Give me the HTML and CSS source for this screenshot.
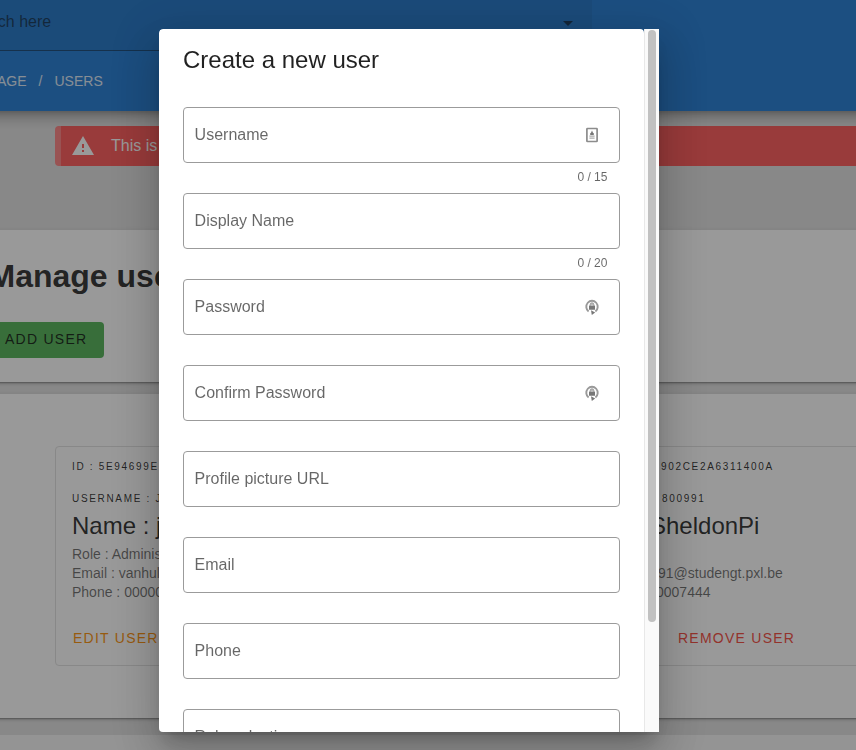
FILE: index.html
```html
<!DOCTYPE html>
<html lang="en">
<head>
<meta charset="utf-8">
<title>Users</title>
<link rel="stylesheet" href="styles.css">
</head>
<body>
<div class="page">
  <header class="header">
    <div class="search"><span class="search-text">Search here</span><span class="caret"></span></div>
    <nav class="crumbs"><span class="crumb-prev">HOMEPAGE</span><span class="slash">/</span><span>USERS</span></nav>
  </header>
  <div class="alert">
    <svg class="alert-icon" viewBox="0 0 24 24"><path d="M13 14H11V10H13M13 18H11V16H13M1 21H23L12 2L1 21Z"/></svg>
    <span>This is</span>
  </div>
  <section class="sheet manage">
    <h1>Manage users</h1>
    <button class="add">ADD USER</button>
  </section>
  <section class="sheet list">
    <div class="users">
      <article class="user">
        <p class="overline">ID : 5E94699E</p>
        <p class="overline">USERNAME : J</p>
        <h2>Name : j</h2>
        <p class="line">Role : Adminis</p>
        <p class="line">Email : vanhul</p>
        <p class="line">Phone : 00000</p>
        <div class="action edit">EDIT USER</div>
      </article>
      <article class="user second">
        <p class="overline id">902CE2A6311400A</p>
        <p class="overline name">800991</p>
        <h2>SheldonPi</h2>
        <p class="line">&nbsp;</p>
        <p class="line mail">91@studengt.pxl.be</p>
        <p class="line phone">0007444</p>
        <div class="action remove">REMOVE USER</div>
      </article>
    </div>
  </section>
  <footer class="footer"></footer>
</div>
<div class="overlay">
  <div class="dialog">
    <div class="card">
      <h3>Create a new user</h3>
      <div class="field"><label>Username</label>
        <svg class="ico" viewBox="0 0 16 16"><rect x="2.9" y="1.5" width="10.2" height="13" rx=".6" fill="#fff" stroke="#8c8c8c" stroke-width="1.7"/><path d="M8 3.5L9 5.8L9.8 6.3V8H6.2V6.3L7 5.8Z" fill="#777"/><path d="M5.4 9.1H10.6M5.4 11.2H10.6" stroke="#aaa" stroke-width="1.3"/></svg>
      </div>
      <div class="counter">0 / 15</div>
      <div class="field"><label>Display Name</label></div>
      <div class="counter">0 / 20</div>
      <div class="field"><label>Password</label>
        <svg class="ico" viewBox="0 0 16 16"><path d="M4.6 12.6A5.7 6 0 1 1 11.4 12.6" fill="none" stroke="#999" stroke-width="1.9"/><path d="M7 11.2L11.2 13.6L7.8 16Z" fill="#777"/><rect x="5" y="6.5" width="6" height="4.3" rx=".4" fill="#777"/><path d="M6.2 7V5.6A1.8 1.8 0 0 1 9.8 5.6V7" fill="#bbb" stroke="#999"/></svg>
      </div>
      <div class="counter"></div>
      <div class="field"><label>Confirm Password</label>
        <svg class="ico" viewBox="0 0 16 16"><path d="M4.6 12.6A5.7 6 0 1 1 11.4 12.6" fill="none" stroke="#999" stroke-width="1.9"/><path d="M7 11.2L11.2 13.6L7.8 16Z" fill="#777"/><rect x="5" y="6.5" width="6" height="4.3" rx=".4" fill="#777"/><path d="M6.2 7V5.6A1.8 1.8 0 0 1 9.8 5.6V7" fill="#bbb" stroke="#999"/></svg>
      </div>
      <div class="counter"></div>
      <div class="field"><label>Profile picture URL</label></div>
      <div class="counter"></div>
      <div class="field"><label>Email</label></div>
      <div class="counter"></div>
      <div class="field"><label>Phone</label></div>
      <div class="counter"></div>
      <div class="field"><label>Role selection</label></div>
    </div>
    <div class="scrollbar"><div class="thumb"></div></div>
  </div>
</div>
</body>
</html>
```
FILE: styles.css
```css
* { box-sizing: border-box; }
html, body { margin: 0; height: 750px; overflow: hidden; }
body { font-family: "Liberation Sans", Arial, sans-serif; font-size: 16px; color: rgba(0,0,0,.87); }
h1, h2, h3, p { margin: 0; white-space: nowrap; }
.page { height: 750px; background: #e0e0e0; overflow: hidden; display: flex; flex-direction: column; isolation: isolate; }
.header {
  flex: none; height: 111px; margin: 0 -30px; padding-left: 30px; background: #1976d2; position: relative; z-index: 1;
  box-shadow: 0 5px 5px -3px rgba(0,0,0,.2), 0 8px 10px 1px rgba(0,0,0,.14), 0 3px 14px 2px rgba(0,0,0,.12);
}
.search {
  width: 592px; height: 51px; padding: 0 19px 7px 0; background: rgba(0,0,0,.06);
  border-bottom: 1px solid rgba(0,0,0,.42); display: flex; align-items: center; justify-content: space-between;
}
.search-text { margin-left: -36px; color: rgba(0,0,0,.6); }
.caret { border: 5px solid transparent; border-top-color: rgba(0,0,0,.6); border-bottom: 0; margin-top: 3px; }
.crumbs { display: flex; height: 60px; align-items: center; font-size: 14px; color: #fff; opacity: .85; }
.crumb-prev { width: 26.5px; display: flex; justify-content: flex-end; }
.slash { width: 28px; text-align: center; }
.alert {
  flex: none; height: 40px; margin: 15px -10px 64px 55px; padding-left: 10px; background: #ff5252; color: #fff;
  border-left: 6px solid #ff7f7f; border-radius: 4px; display: flex; align-items: center; gap: 16px;
}
.alert-icon { width: 24px; height: 24px; fill: currentColor; }
.sheet {
  flex: none; margin: 0 -20px; background: #fff;
  box-shadow: 0 3px 1px -2px rgba(0,0,0,.2), 0 2px 2px rgba(0,0,0,.14), 0 1px 5px rgba(0,0,0,.12);
}
.manage { height: 152px; padding: 27px 0 0 20px; }
h1 { font-size: 32px; line-height: 38px; margin-left: -11.5px; }
.add {
  display: block; width: 115px; height: 36px; margin: 27px 0 0 -11px; padding: 0 0 2px 16px; border: 0; border-radius: 4px;
  background: #4caf50; color: rgba(0,0,0,.87); font: 14px "Liberation Sans", Arial, sans-serif;
  letter-spacing: 1.25px; text-align: left;
}
.list { height: 324px; margin-top: 12px; padding: 52px 0 0 75px; }
.users { display: flex; width: 900px; }
.user { flex: none; width: 400px; height: 220px; border: 1px solid #e0e0e0; border-radius: 4px; padding: 4px 16px; }
.second { width: 480px; margin-left: 12px; padding-left: 179px; }
.overline { font-size: 10px; line-height: 32px; letter-spacing: 1.67px; }
.user h2 { font-size: 24px; font-weight: 400; line-height: 32px; margin-top: -5px; }
.line { font-size: 14px; line-height: 19px; color: rgba(0,0,0,.6); }
.user h2 + .line { margin-top: 3px; }
.action { font-size: 14px; letter-spacing: 1.25px; line-height: 36px; margin: 18px 0 0 1px; }
.edit { color: #fb8c00; }
.remove { color: #f44336; margin-left: 31px; }
.id { padding-left: 14px; }
.name { padding-left: 15px; }
.second h2 { padding-left: 3px; }
.mail { padding-left: 11px; }
.phone { padding-left: 9px; }
.footer { margin-top: 17px; height: 40px; background: #f5f5f5; flex: none; }
.overlay {
  position: fixed; inset: 0; z-index: 2; background: rgba(33,33,33,.46);
  display: flex; align-items: flex-start; justify-content: center;
}
.dialog {
  width: 500px; height: 703px; margin: 29px 38px 0 0; display: flex; border-radius: 4px 0 0 4px; overflow: hidden;
  box-shadow: 0 11px 15px -7px rgba(0,0,0,.2), 0 24px 38px 3px rgba(0,0,0,.14), 0 9px 46px 8px rgba(0,0,0,.12);
}
.card { width: 485px; padding: 15px 24px 0; background: #fff; border-radius: 4px 4px 0 0; overflow: hidden; }
h3 { font-size: 24px; line-height: 32px; font-weight: 400; margin-bottom: 31px; }
.field {
  height: 56px; border: 1px solid #9b9b9b; border-radius: 4px; padding: 0 19px 0 10.6px;
  display: flex; align-items: center; justify-content: space-between;
}
.field label { color: rgba(0,0,0,.6); line-height: 20px; }
.ico { width: 16px; height: 16px; }
.counter { height: 30px; padding: 8px 12.6px 0 0; text-align: right; font-size: 12px; line-height: 12px; color: rgba(0,0,0,.6); }
.scrollbar { width: 15px; background: #fafafa; border-left: 1px solid #e8e8e8; padding: 1px 3px; }
.thumb { height: 592px; width: 8px; border-radius: 4px; background: #c1c1c1; }
```
